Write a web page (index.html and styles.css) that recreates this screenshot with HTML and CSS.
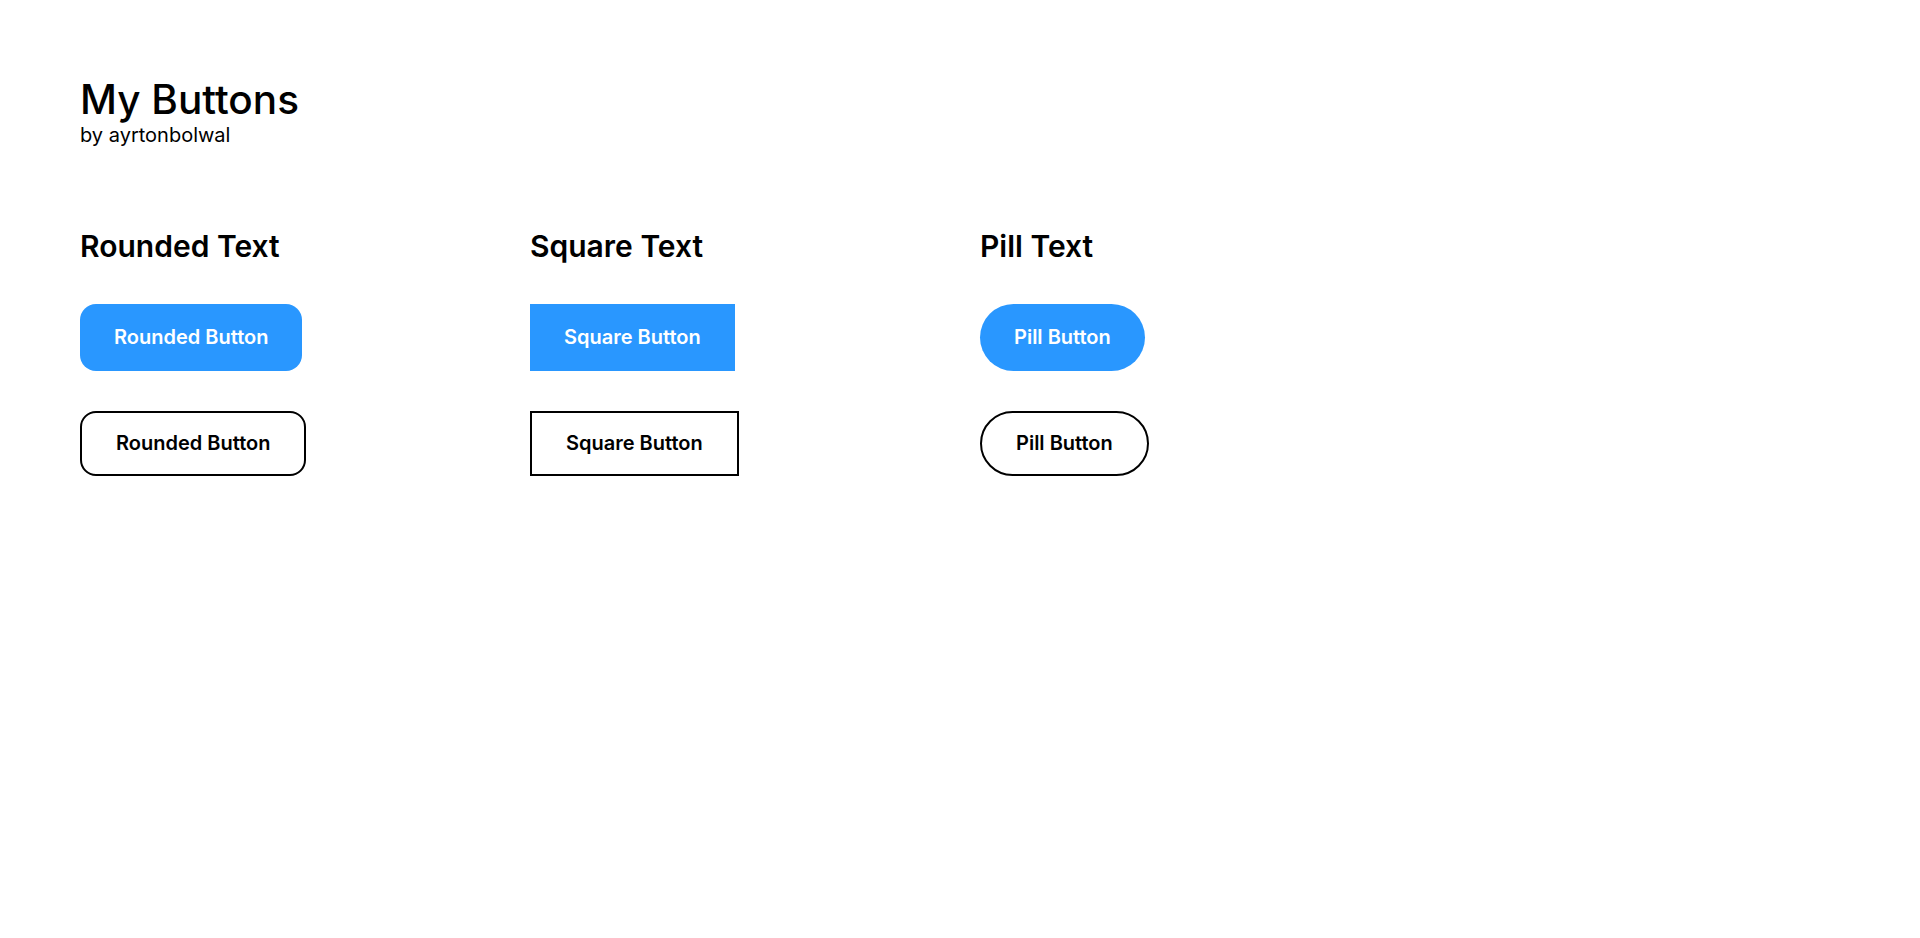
FILE: index.html
```html
<!DOCTYPE html>
<html lang="en">
<head>
<meta charset="utf-8">
<title>My Buttons</title>
<link rel="stylesheet" href="styles.css">
</head>
<body>
<main class="page">
  <header class="intro">
    <h1 class="title">My Buttons</h1>
    <p class="byline">by ayrtonbolwal</p>
  </header>
  <section class="groups">
    <div class="group">
      <h2 class="group-title">Rounded Text</h2>
      <button class="btn btn-fill btn-rounded">Rounded Button</button>
      <button class="btn btn-outline btn-rounded">Rounded Button</button>
    </div>
    <div class="group">
      <h2 class="group-title">Square Text</h2>
      <button class="btn btn-fill btn-square">Square Button</button>
      <button class="btn btn-outline btn-square">Square Button</button>
    </div>
    <div class="group">
      <h2 class="group-title">Pill Text</h2>
      <button class="btn btn-fill btn-pill">Pill Button</button>
      <button class="btn btn-outline btn-pill">Pill Button</button>
    </div>
  </section>
</main>
</body>
</html>
```

FILE: styles.css
```css
* { box-sizing: border-box; }

html, body {
  margin: 0;
  padding: 0;
  background: #ffffff;
  color: #000000;
  font-family: Inter, "Noto Sans", sans-serif;
}

.page {
  padding: 76px 80px;
}

.intro {
  display: flex;
  flex-direction: column;
}

.title {
  margin: 0;
  font-size: 40.5px;
  font-weight: 500;
  line-height: 48px;
}

.byline {
  margin: 0;
  font-size: 20px;
  font-weight: 400;
  line-height: 22px;
}

.groups {
  display: flex;
  margin-top: 82px;
}

.group {
  width: 450px;
  display: flex;
  flex-direction: column;
  align-items: flex-start;
  gap: 40px;
}

.group-title {
  margin: 0;
  font-size: 30px;
  font-weight: 600;
  line-height: 36px;
}

.btn {
  font-family: inherit;
  font-size: 20px;
  font-weight: 600;
  line-height: 25px;
  cursor: pointer;
  margin: 0;
}

.btn-fill {
  background: #2997ff;
  color: #ffffff;
  border: none;
  padding: 21px 34px;
}

.btn-outline {
  background: #ffffff;
  color: #000000;
  border: 2px solid #000000;
  padding: 18px 34px;
}

.btn-rounded { border-radius: 16px; }
.btn-square { border-radius: 0; }
.btn-pill { border-radius: 999px; }
```
